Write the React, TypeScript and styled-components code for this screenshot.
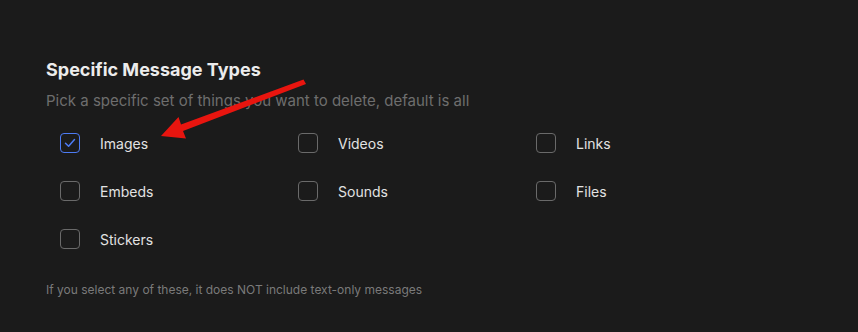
import React, { useState } from "react";
import styled, { createGlobalStyle } from "styled-components";

const GlobalStyle = createGlobalStyle`
  html, body {
    margin: 0;
    padding: 0;
    background: #1b1b1b;
    font-family: Inter, "Noto Sans", sans-serif;
  }
`;

const TYPES = ["Images", "Videos", "Links", "Embeds", "Sounds", "Files", "Stickers"];

export default function App() {
  const [checked, setChecked] = useState<Record<string, boolean>>({ Images: true });

  const toggle = (name: string) =>
    setChecked((prev) => ({ ...prev, [name]: !prev[name] }));

  return (
    <Page>
      <GlobalStyle />
      <Section>
        <Title>Specific Message Types</Title>
        <Subtitle>Pick a specific set of things you want to delete, default is all</Subtitle>
        <Grid>
          {TYPES.map((name) => (
            <Option key={name} onClick={() => toggle(name)}>
              <Box $checked={!!checked[name]}>
                {checked[name] && (
                  <svg width="14" height="14" viewBox="0 0 14 14" fill="none">
                    <path
                      d="M2.5 7.3 L5.6 10.3 L11.5 3.6"
                      stroke="#4d7bf3"
                      strokeWidth="1.5"
                      strokeLinecap="round"
                      strokeLinejoin="round"
                    />
                  </svg>
                )}
              </Box>
              <Label>{name}</Label>
            </Option>
          ))}
        </Grid>
        <Note>If you select any of these, it does NOT include text-only messages</Note>
      </Section>
      <Arrow width="858" height="332" viewBox="0 0 858 332">
        <path d="M303.5 79.5 L306 84 L183 131 L186 138.5 L161 136 L178.5 117 L181 124.5 Z" fill="#e8150f" />
      </Arrow>
    </Page>
  );
}

const Page = styled.div`
  position: relative;
  width: 858px;
  height: 332px;
  background: #1b1b1b;
  overflow: hidden;
`;

const Section = styled.div`
  display: flex;
  flex-direction: column;
  padding: 58px 0 0 46px;
`;

const Title = styled.h2`
  margin: 0;
  font-size: 18px;
  font-weight: 700;
  line-height: 24px;
  color: #ececec;
`;

const Subtitle = styled.p`
  margin: 9px 0 0;
  font-size: 15px;
  line-height: 20px;
  color: #6e6e6e;
`;

const Grid = styled.div`
  display: grid;
  grid-template-columns: repeat(3, 238px);
  grid-auto-rows: 48px;
  margin-top: 8px;
  padding-left: 14px;
`;

const Option = styled.label`
  display: flex;
  align-items: center;
  gap: 20px;
  cursor: pointer;
`;

const Box = styled.span<{ $checked: boolean }>`
  box-sizing: border-box;
  width: 20px;
  height: 20px;
  border-radius: 4px;
  border: 1px solid ${(p) => (p.$checked ? "#4d7bf3" : "#6a6a6a")};
  display: flex;
  align-items: center;
  justify-content: center;
`;

const Label = styled.span`
  font-size: 14px;
  color: #e2e2e2;
`;

const Note = styled.p`
  margin: 19px 0 0;
  font-size: 12px;
  line-height: 16px;
  color: #7a7a7a;
`;

const Arrow = styled.svg`
  position: absolute;
  left: 0;
  top: 0;
  pointer-events: none;
`;
